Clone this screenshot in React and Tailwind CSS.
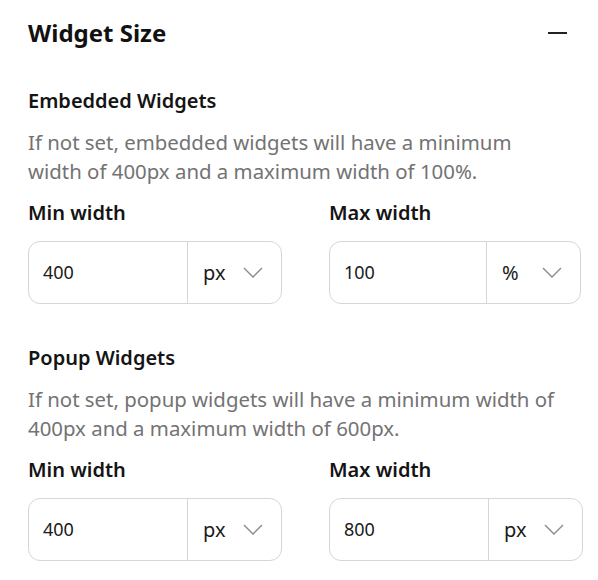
import React from 'react'

const Chevron = () => (
  <svg width="20" height="11" viewBox="0 0 20 11" fill="none" className="text-[#8a8a8a]">
    <path d="M1 1l9 9 9-9" stroke="currentColor" strokeWidth="1.4" />
  </svg>
)

const SizeField = ({ label, value, unit, wide }) => (
  <div>
    <p className="text-[20px] leading-[28px] font-semibold text-[#141414]">{label}</p>
    <div className={`mt-[14px] flex h-[63px] rounded-[12px] border border-[#d6d6d6] bg-white ${wide ? 'w-[254px]' : 'w-[252px]'}`}>
      <div className="flex flex-1 items-center pl-[14px] text-[18px] text-[#1a1a1a]">{value}</div>
      <div className="flex w-[94px] items-center gap-[18px] border-l border-[#d6d6d6] pl-[15px] text-[20px] text-[#1a1a1a]">
        <span className="w-[22px]">{unit}</span>
        <Chevron />
      </div>
    </div>
  </div>
)

const Group = ({ title, desc, min, max, wideMax, className }) => (
  <div className={className}>
    <h3 className="text-[20px] leading-[28px] font-semibold text-[#141414]">{title}</h3>
    <p className="mt-[13px] text-[20.4px] leading-[29px] text-[#737373]">{desc}</p>
    <div className="mt-[13px] grid grid-cols-[254px_254px] gap-x-[47px]">
      <SizeField label="Min width" value={min.value} unit={min.unit} wide />
      <SizeField label="Max width" value={max.value} unit={max.unit} wide={wideMax} />
    </div>
  </div>
)

export default function App() {
  return (
    <div className="h-[580px] w-[598px] bg-white pl-[28px] pr-[31px] pt-[17px]" style={{ fontFamily: '"Noto Sans", sans-serif' }}>
      <div className="flex items-center justify-between">
        <h2 className="text-[24px] leading-[32px] font-bold text-[#111]">Widget Size</h2>
        <div className="h-[2px] w-[19px] bg-[#222]" />
      </div>

      <Group
        className="mt-[38px]"
        title="Embedded Widgets"
        desc="If not set, embedded widgets will have a minimum width of 400px and a maximum width of 100%."
        min={{ value: '400', unit: 'px' }}
        max={{ value: '100', unit: '%' }}
      />

      <Group
        className="mt-[40px]"
        title="Popup Widgets"
        desc="If not set, popup widgets will have a minimum width of 400px and a maximum width of 600px."
        min={{ value: '400', unit: 'px' }}
        max={{ value: '800', unit: 'px' }}
        wideMax
      />
    </div>
  )
}
